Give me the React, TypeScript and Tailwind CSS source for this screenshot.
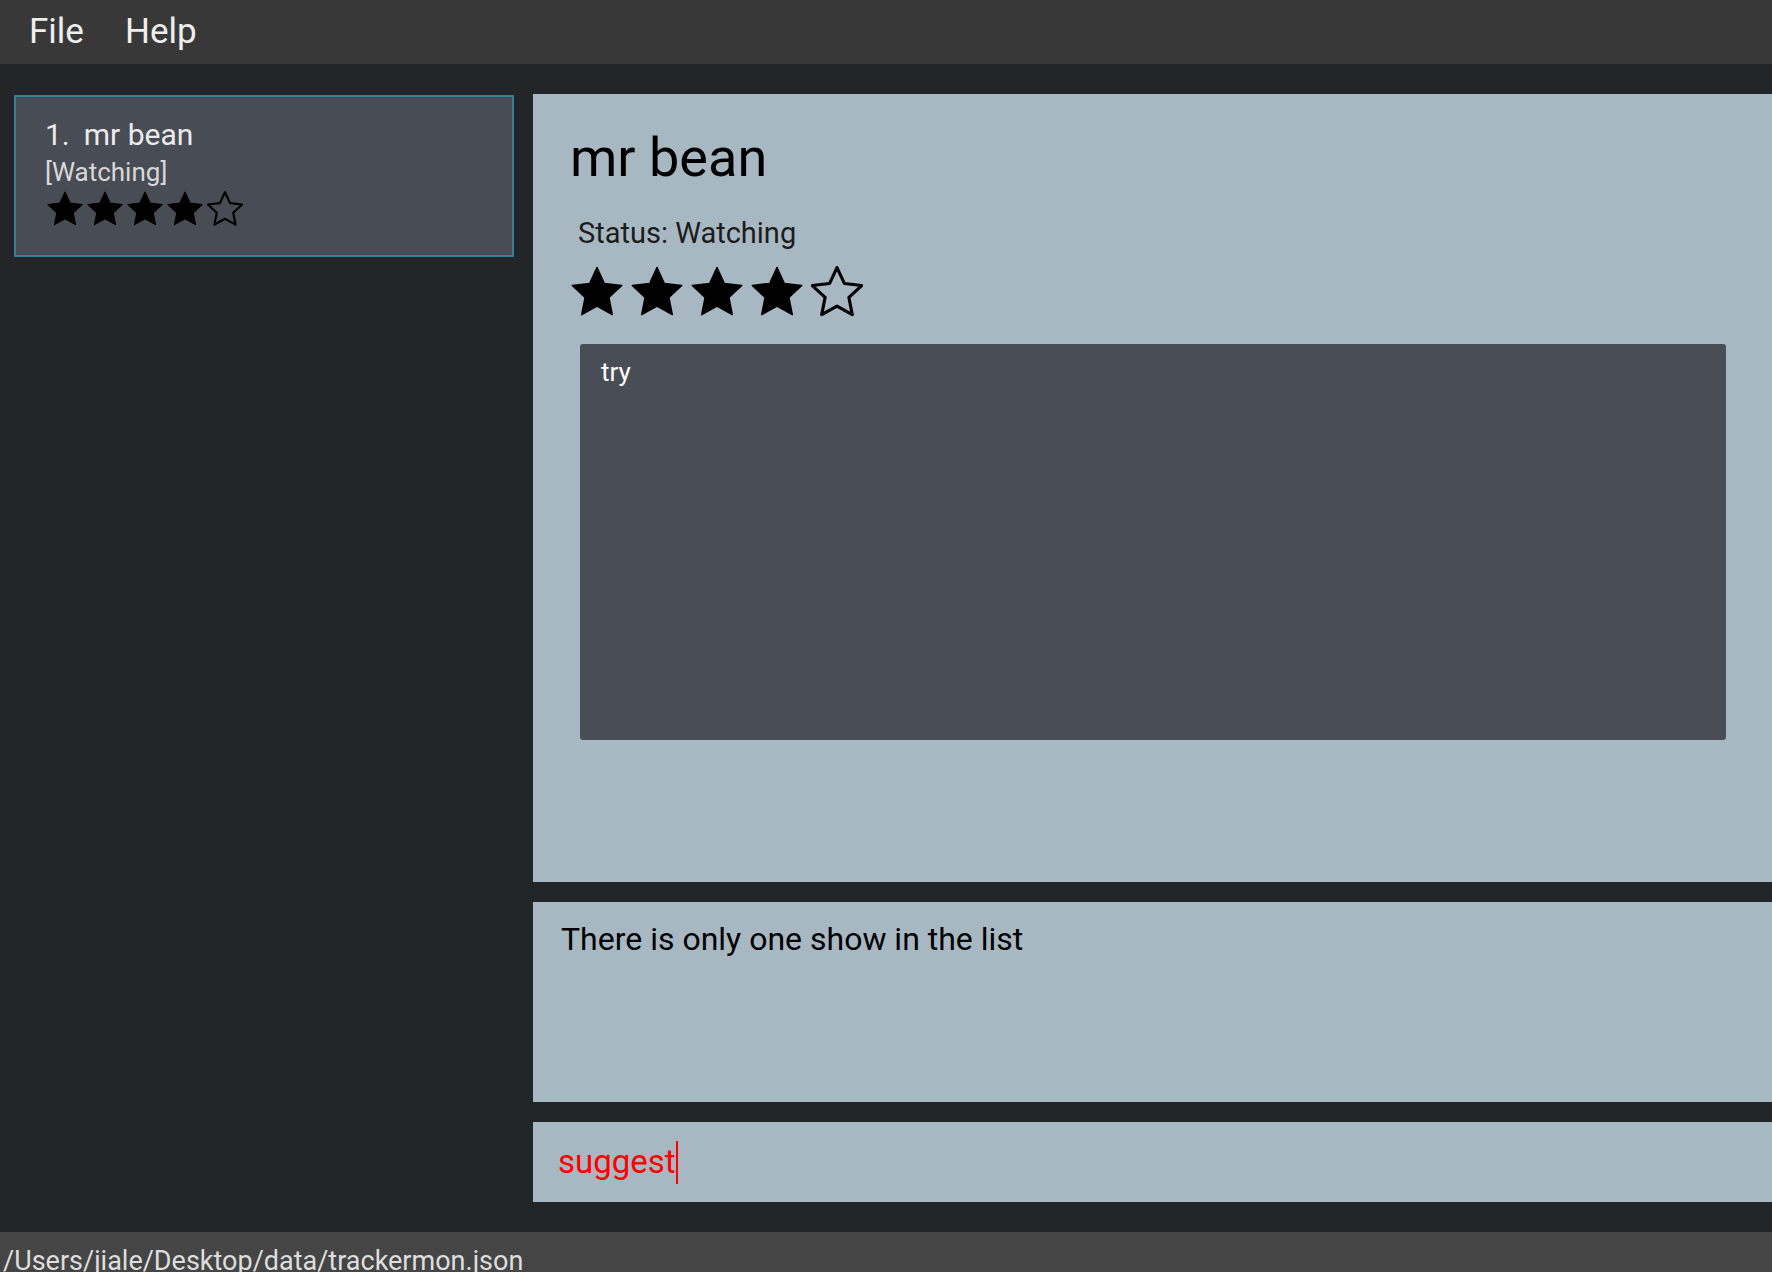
import React from "react";

const STAR_POINTS =
  "50,3 64.11,33.58 97.55,37.55 72.83,60.42 79.39,93.45 50,77 20.61,93.45 27.17,60.42 2.45,37.55 35.89,33.58";

function Star({ filled, size }: { filled: boolean; size: number }) {
  return (
    <svg width={size} height={size} viewBox="0 0 100 100" className="block shrink-0">
      <polygon
        points={STAR_POINTS}
        fill={filled ? "#000000" : "none"}
        stroke="#000000"
        strokeWidth={filled ? 3 : 6}
        strokeLinejoin="round"
      />
    </svg>
  );
}

function Stars({ rating, size, gap }: { rating: number; size: number; gap: string }) {
  return (
    <div className={`flex ${gap}`}>
      {[0, 1, 2, 3, 4].map((i) => (
        <Star key={i} filled={i < rating} size={size} />
      ))}
    </div>
  );
}

export default function App() {
  return (
    <div
      className="w-full h-[1272px] flex flex-col overflow-hidden bg-[#232629]"
      style={{ fontFamily: "Roboto, 'Liberation Sans', sans-serif" }}
    >
      {/* Menu bar */}
      <div className="h-16 shrink-0 bg-[#383838] flex items-center text-[35px] leading-[40px] text-[#eeeeee]">
        <span className="pl-[29px]">File</span>
        <span className="ml-[41px]">Help</span>
      </div>

      {/* Main */}
      <div className="flex-1 flex min-h-0">
        {/* Left list */}
        <div className="w-[533px] shrink-0 pl-[14px] pr-[19px] pt-[31px]">
          <div className="h-[162px] w-[500px] border-2 border-[#3b7d92] bg-[#484c55] pl-[29px] pt-[20px]">
            <div className="flex text-[30px] leading-[36px] text-[#ebebeb]">
              <span>1.</span>
              <span className="ml-[14px]">mr bean</span>
            </div>
            <div className="mt-[4px] text-[26px] leading-[31px] text-[#d8d8d8]">[Watching]</div>
            <div className="mt-[3px] ml-[2px]">
              <Stars rating={4} size={36} gap="gap-[4px]" />
            </div>
          </div>
        </div>

        {/* Right column */}
        <div className="flex-1 flex flex-col pt-[30px] pb-[30px] gap-[20px] min-w-0">
          {/* Detail panel */}
          <div className="h-[788px] shrink-0 bg-[#a8b8c2] pl-[37px] pt-[37px]">
            <div className="text-[54px] leading-[54px] text-black">mr bean</div>
            <div className="mt-[31px] ml-[8px] text-[29px] leading-[35px] text-[#1c1c1c]">
              Status: Watching
            </div>
            <div className="mt-[15px] ml-[1px]">
              <Stars rating={4} size={52} gap="gap-[8px]" />
            </div>
            <div className="mt-[26px] ml-[10px] w-[1146px] h-[396px] rounded-[3px] bg-[#494d56] pl-[21px] pt-[13px] text-[26px] leading-[31px] text-white">
              try
            </div>
          </div>

          {/* Result display */}
          <div className="h-[200px] shrink-0 bg-[#a8b8c2] pl-[28px] pt-[17px] text-[32px] leading-[40px] text-black">
            There is only one show in the list
          </div>

          {/* Command box */}
          <div className="h-[80px] shrink-0 bg-[#a8b8c2] pl-[25px] flex items-center">
            <span className="text-[33px] leading-[40px] text-[#ff0000]">suggest</span>
            <span className="inline-block w-[2px] h-[43px] bg-[#ff0000]" />
          </div>
        </div>
      </div>

      {/* Status bar */}
      <div className="h-[40px] shrink-0 bg-[#454545] overflow-hidden pl-[3px] pt-[13px] text-[27px] leading-[32px] text-[#dedede] whitespace-nowrap">
        /Users/jiale/Desktop/data/trackermon.json
      </div>
    </div>
  );
}
